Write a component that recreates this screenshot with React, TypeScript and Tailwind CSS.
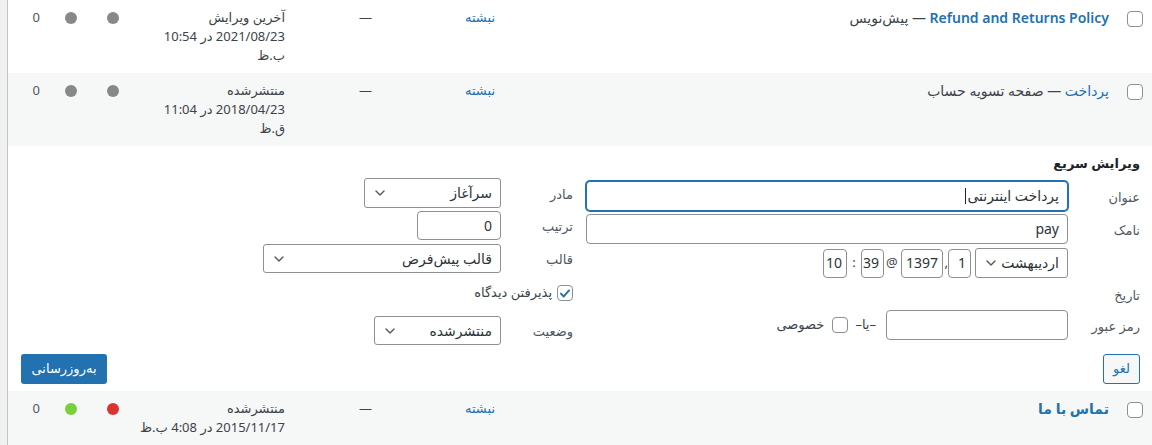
import React from "react";

type Dot = "gray" | "red" | "green";

const dotColor: Record<Dot, string> = {
  gray: "bg-[#888888]",
  red: "bg-[#dc3232]",
  green: "bg-[#7ad03a]",
};

function Box({ checked = false }: { checked?: boolean }) {
  return (
    <span className="inline-flex h-4 w-4 shrink-0 items-center justify-center rounded-[4px] border border-[#8c8f94] bg-white">
      {checked && (
        <svg viewBox="0 0 20 20" className="h-[15px] w-[15px]">
          <path d="M4.2 10.2 8.2 14.2 15.8 5.6" fill="none" stroke="#2271b1" strokeWidth="2.8" strokeLinecap="round" strokeLinejoin="round" />
        </svg>
      )}
    </span>
  );
}

function Chevron() {
  return (
    <svg viewBox="0 0 10 6" className="h-[6px] w-[10px] shrink-0">
      <path d="M1 1 5 5 9 1" fill="none" stroke="#50575e" strokeWidth="1.4" strokeLinecap="round" strokeLinejoin="round" />
    </svg>
  );
}

function Select({ value, className }: { value: string; className: string }) {
  return (
    <div className={`flex items-center justify-between rounded-[3px] border border-[#8c8f94] bg-white pr-[8px] pl-[10px] text-[14px] text-[#2c3338] ${className}`}>
      <span className="leading-none">{value}</span>
      <Chevron />
    </div>
  );
}

function Input({ value = "", className, focused = false, caret = false }: { value?: string; className: string; focused?: boolean; caret?: boolean }) {
  return (
    <div
      className={`flex items-center rounded-[4px] border bg-white pr-[8px] text-[14px] text-[#2c3338] ${
        focused ? "border-[#2271b1] shadow-[0_0_0_1px_#2271b1]" : "border-[#8c8f94]"
      } ${className}`}
    >
      <span className="leading-none">{value}</span>
      {caret && <span className="mr-[1px] h-[16px] w-px bg-[#1d2327]" />}
    </div>
  );
}

function Field({ label, className = "", children }: { label: string; className?: string; children: React.ReactNode }) {
  return (
    <div className={`flex items-center ${className}`}>
      <span className="w-[72px] shrink-0 pt-[3px] text-[13px] text-[#50575e]">{label}</span>
      {children}
    </div>
  );
}

function ListRow({
  bg,
  height,
  title,
  date,
  dots,
}: {
  bg: string;
  height: string;
  title: React.ReactNode;
  date: string[];
  dots: [Dot, Dot];
}) {
  return (
    <div className={`flex shrink-0 overflow-hidden text-[13px] leading-[19px] text-[#3c434a] ${bg} ${height}`}>
      <div className="flex w-[35px] shrink-0 justify-start pt-[11px] pr-[9px]">
        <Box />
      </div>
      <div className="w-[612px] shrink-0 pt-[8px] pr-[8px] text-[14px] leading-[19px]">{title}</div>
      <div className="w-[123px] shrink-0 pt-[8px] pr-[10px] text-[#2271b1]">نبشته</div>
      <div className="w-[87px] shrink-0 pt-[8px] pr-[10px]">—</div>
      <div className="w-[150px] shrink-0 pt-[8px] pr-[10px]">
        {date.map((line) => (
          <div key={line} className="whitespace-nowrap">
            {line}
          </div>
        ))}
      </div>
      <div className="w-[53px] shrink-0 pt-[12px] pr-[26px]">
        <span className={`block h-[12px] w-[12px] rounded-full ${dotColor[dots[0]]}`} />
      </div>
      <div className="w-[42px] shrink-0 pt-[12px] pr-[15px]">
        <span className={`block h-[12px] w-[12px] rounded-full ${dotColor[dots[1]]}`} />
      </div>
      <div className="w-[42px] shrink-0 pt-[8px] pr-[10px] text-[#50575e]">0</div>
    </div>
  );
}

function QuickEdit() {
  return (
    <div className="flex h-[245px] shrink-0 flex-col bg-white pt-[8px] pr-[12px] pb-[7px] pl-[13px] text-[13px] text-[#3c434a]">
      <div className="flex gap-[13px]">
        {/* title, slug, date and password */}
        <div className="flex w-[554px] shrink-0 flex-col">
          <div className="h-[19px] text-[13px] leading-[19px] font-bold text-[#1d2327]">ویرایش سریع</div>
          <Field label="عنوان" className="mt-[8px]">
            <Input value="پرداخت اینترنتی" className="h-[30px] w-[482px]" focused caret />
          </Field>
          <Field label="نامک" className="mt-[3px]">
            <Input value="pay" className="h-[30px] w-[482px]" />
          </Field>
          <div className="mt-[4px] flex items-center">
            <span className="w-[72px] shrink-0" />
            <Select value="اردیبهشت" className="h-[30px] w-[93px]" />
            <Input value="1" className="mr-[4px] h-[29px] w-[23px] !pr-[4px]" />
            <span className="w-[5px] text-[13px]">,</span>
            <Input value="1397" className="h-[29px] w-[42px] !pr-[4px]" />
            <span className="w-[17px] pl-[2px] text-left text-[13px]">@</span>
            <Input value="39" className="h-[29px] w-[23px] !pr-[4px]" />
            <span className="w-[14px] text-center text-[13px]">:</span>
            <Input value="10" className="h-[29px] w-[24px] !pr-[4px]" />
          </div>
          <div className="mt-[8px] h-[19px] leading-[19px] text-[#50575e]">تاریخ</div>
          <Field label="رمز عبور" className="mt-[5px]">
            <Input className="h-[30px] w-[182px]" />
            <span className="mr-[10px] text-[13px]">–یا–</span>
            <span className="mr-[7px] flex">
              <Box />
            </span>
            <span className="mr-[8px] text-[13px]">خصوصی</span>
          </Field>
        </div>

        {/* page attributes */}
        <div className="flex flex-1 flex-col pt-[24px]">
          <Field label="مادر">
            <Select value="سرآغاز" className="h-[30px] w-[137px]" />
          </Field>
          <Field label="ترتیب" className="mt-[3px]">
            <Input value="0" className="h-[29px] w-[84px]" />
          </Field>
          <Field label="قالب" className="mt-[4px]">
            <Select value="قالب پیش‌فرض" className="h-[29px] w-[238px]" />
          </Field>
          <div className="mt-[12px] flex h-[16px] items-center">
            <Box checked />
            <span className="mr-[5px] text-[13px]">پذیرفتن دیدگاه</span>
          </div>
          <Field label="وضعیت" className="mt-[15px]">
            <Select value="منتشرشده" className="h-[29px] w-[127px]" />
          </Field>
        </div>
      </div>

      <div className="mt-[9px] flex justify-between">
        <button className="flex h-[30px] w-[37px] items-center justify-center rounded-[3px] border border-[#2271b1] bg-[#f6f7f7] text-[13px] text-[#2271b1]">
          لغو
        </button>
        <button className="flex h-[30px] w-[86px] items-center justify-center rounded-[3px] bg-[#2271b1] text-[13px] text-white">
          به‌روزرسانی
        </button>
      </div>
    </div>
  );
}

export default function App() {
  return (
    <div className="flex h-[445px] w-[1152px] overflow-hidden bg-white font-['Noto_Sans','DejaVu_Sans',sans-serif]">
      <div className="w-[8px] shrink-0 border-r border-[#c3c4c7] bg-[#f0f0f1]" />
      <div dir="rtl" className="flex w-[1144px] flex-col">
        <ListRow
          bg="bg-white"
          height="h-[73px]"
          title={
            <>
              <span className="font-semibold text-[#2271b1]">Refund and Returns Policy</span>
              <span className="text-[#3c434a]"> — پیش‌نویس</span>
            </>
          }
          date={["آخرین ویرایش", "2021/08/23 در 10:54", "ب.ظ"]}
          dots={["gray", "gray"]}
        />
        <ListRow
          bg="bg-[#f6f7f7]"
          height="h-[73px]"
          title={
            <>
              <span className="text-[#2271b1]">پرداخت</span>
              <span className="text-[#3c434a]"> — صفحه تسویه حساب</span>
            </>
          }
          date={["منتشرشده", "2018/04/23 در 11:04", "ق.ظ"]}
          dots={["gray", "gray"]}
        />
        <QuickEdit />
        <ListRow
          bg="bg-[#f6f7f7]"
          height="h-[54px]"
          title={<span className="font-bold text-[#2271b1]">تماس با ما</span>}
          date={["منتشرشده", "2015/11/17 در 4:08 ب.ظ"]}
          dots={["red", "green"]}
        />
      </div>
    </div>
  );
}
